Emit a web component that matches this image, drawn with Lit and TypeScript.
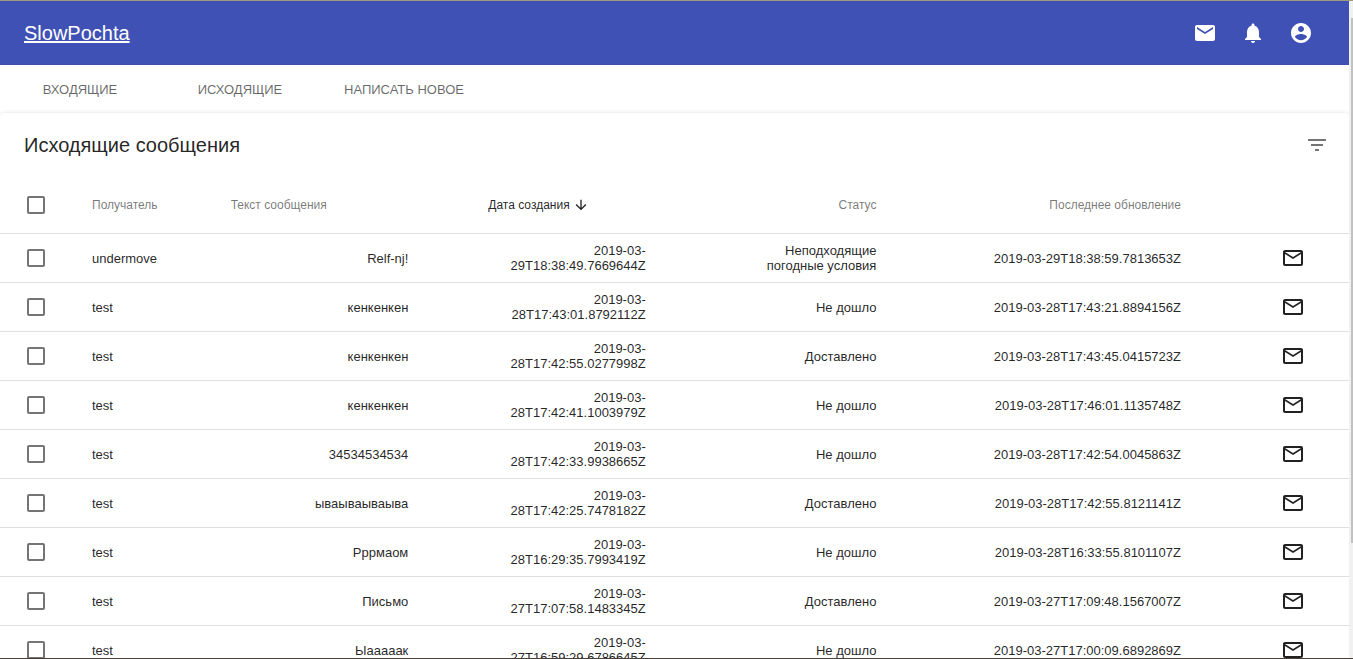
import { LitElement, html, css, svg } from "lit";
import { customElement, property, state } from "lit/decorators.js";

const ICONS: Record<string, string> = {
  mail: "M20 4H4c-1.1 0-1.99.9-1.99 2L2 18c0 1.1.9 2 2 2h16c1.1 0 2-.9 2-2V6c0-1.1-.9-2-2-2zm0 4l-8 5-8-5V6l8 5 8-5v2z",
  mailOutline:
    "M20 4H4c-1.1 0-1.99.9-1.99 2L2 18c0 1.1.9 2 2 2h16c1.1 0 2-.9 2-2V6c0-1.1-.9-2-2-2zm0 14H4V8l8 5 8-5v10zm-8-7L4 6h16l-8 5z",
  bell: "M12 22c1.1 0 2-.9 2-2h-4c0 1.1.89 2 2 2zm6-6v-5c0-3.07-1.64-5.64-4.5-6.32V4c0-.83-.67-1.5-1.5-1.5s-1.5.67-1.5 1.5v.68C7.63 5.36 6 7.92 6 11v5l-2 2v1h16v-1l-2-2z",
  account:
    "M12 2C6.48 2 2 6.48 2 12s4.48 10 10 10 10-4.48 10-10S17.52 2 12 2zm0 3c1.66 0 3 1.34 3 3s-1.34 3-3 3-3-1.34-3-3 1.34-3 3-3zm0 14.2c-2.5 0-4.71-1.28-6-3.22.03-1.99 4-3.08 6-3.08 1.99 0 5.97 1.09 6 3.08-1.29 1.94-3.5 3.22-6 3.22z",
  filter: "M10 18h4v-2h-4v2zM3 6v2h18V6H3zm3 7h12v-2H6v2z",
  arrowDown: "M20 12l-1.41-1.41L13 16.17V4h-2v12.17l-5.58-5.59L4 12l8 8 8-8z",
};

@customElement("md-icon")
export class MdIcon extends LitElement {
  static styles = css`
    :host {
      display: inline-block;
      width: 24px;
      height: 24px;
    }
    .glyph {
      display: block;
      width: 100%;
      height: 100%;
      fill: currentColor;
    }
  `;

  @property() name = "";

  render() {
    return html`<svg class="glyph" viewBox="0 0 24 24" aria-hidden="true">
      ${svg`<path d=${ICONS[this.name] ?? ""}></path>`}
    </svg>`;
  }
}

interface Message {
  to: string;
  text: string;
  created: string;
  status: string;
  updated: string;
}

const MESSAGES: Message[] = [
  { to: "undermove", text: "Relf-nj!", created: "2019-03-29T18:38:49.7669644Z", status: "Неподходящие погодные условия", updated: "2019-03-29T18:38:59.7813653Z" },
  { to: "test", text: "кенкенкен", created: "2019-03-28T17:43:01.8792112Z", status: "Не дошло", updated: "2019-03-28T17:43:21.8894156Z" },
  { to: "test", text: "кенкенкен", created: "2019-03-28T17:42:55.0277998Z", status: "Доставлено", updated: "2019-03-28T17:43:45.0415723Z" },
  { to: "test", text: "кенкенкен", created: "2019-03-28T17:42:41.1003979Z", status: "Не дошло", updated: "2019-03-28T17:46:01.1135748Z" },
  { to: "test", text: "34534534534", created: "2019-03-28T17:42:33.9938665Z", status: "Не дошло", updated: "2019-03-28T17:42:54.0045863Z" },
  { to: "test", text: "ываываываыва", created: "2019-03-28T17:42:25.7478182Z", status: "Доставлено", updated: "2019-03-28T17:42:55.8121141Z" },
  { to: "test", text: "Рррмаом", created: "2019-03-28T16:29:35.7993419Z", status: "Не дошло", updated: "2019-03-28T16:33:55.8101107Z" },
  { to: "test", text: "Письмо", created: "2019-03-27T17:07:58.1483345Z", status: "Доставлено", updated: "2019-03-27T17:09:48.1567007Z" },
  { to: "test", text: "Ыааааак", created: "2019-03-27T16:59:29.6786645Z", status: "Не дошло", updated: "2019-03-27T17:00:09.6892869Z" },
];

@customElement("app-root")
export class AppRoot extends LitElement {
  static styles = css`
    :host {
      display: grid;
      grid-template-columns: minmax(0, 1fr) 4px;
      height: 100vh;
      box-sizing: border-box;
      border-top: 1px solid #a09a82;
      border-bottom: 1px solid #4b4038;
      overflow: hidden;
      background: #fff;
      color: rgba(0, 0, 0, 0.87);
      font-family: "Liberation Sans", Arial, sans-serif;
    }
    .page {
      overflow: hidden;
    }
    .appbar {
      display: flex;
      align-items: center;
      justify-content: space-between;
      height: 64px;
      padding: 0 24px;
      background: #3f51b5;
      color: #fff;
    }
    .brand {
      color: inherit;
      font-size: 20px;
      line-height: 32px;
    }
    .actions {
      display: flex;
    }
    .icon-button {
      display: inline-flex;
      align-items: center;
      justify-content: center;
      width: 48px;
      height: 48px;
      padding: 0;
      border: 0;
      border-radius: 50%;
      background: none;
      color: inherit;
      cursor: pointer;
    }
    .tabs {
      display: flex;
      height: 48px;
    }
    .tab {
      min-width: 160px;
      padding: 0 24px;
      border: 0;
      background: none;
      color: rgba(0, 0, 0, 0.6);
      font: inherit;
      font-size: 13px;
      text-transform: uppercase;
      cursor: pointer;
    }
    .paper {
      border-radius: 4px;
      background: #fff;
      box-shadow: 0 1px 5px rgba(0, 0, 0, 0.2), 0 2px 2px rgba(0, 0, 0, 0.14),
        0 3px 1px -2px rgba(0, 0, 0, 0.12);
    }
    .toolbar {
      display: flex;
      align-items: center;
      justify-content: space-between;
      height: 64px;
      padding: 0 8px 0 24px;
    }
    .title {
      margin: 0;
      font-size: 20px;
      font-weight: 400;
      line-height: 32px;
    }
    .filter {
      color: rgba(0, 0, 0, 0.54);
    }
    .table {
      width: 100%;
      table-layout: fixed;
      border-collapse: separate;
      border-spacing: 0;
    }
    .col-check { width: 92px; }
    .col-to { width: 8.5%; }
    .col-text { width: 19.1%; }
    .col-created { width: 17.6%; }
    .col-status { width: 17.1%; }
    .col-action { width: 112px; }
    .head {
      height: 57px;
    }
    .row {
      height: 49px;
    }
    .cell {
      padding: 0 56px 0 24px;
      border-bottom: 1px solid #e0e0e0;
      font-size: 13px;
      font-weight: 400;
      line-height: 15px;
      text-align: left;
      vertical-align: middle;
    }
    .head .cell {
      color: rgba(0, 0, 0, 0.54);
      font-size: 12px;
    }
    .cell.check {
      padding: 0 0 0 27px;
    }
    .cell.to {
      padding: 0;
    }
    .cell.numeric {
      text-align: right;
    }
    .cell.action {
      padding: 0;
      text-align: center;
    }
    .cell.action .icon-button {
      height: 24px;
      vertical-align: middle;
    }
    .checkbox {
      appearance: none;
      display: block;
      width: 18px;
      height: 18px;
      margin: 0;
      border: 2px solid #757575;
      border-radius: 2px;
    }
    .checkbox:checked {
      border-color: #3f51b5;
      background: #3f51b5;
    }
    .sort {
      display: inline-flex;
      align-items: center;
      gap: 3px;
      height: 16px;
      padding: 0;
      border: 0;
      background: none;
      color: inherit;
      font: inherit;
      white-space: nowrap;
      vertical-align: middle;
      cursor: pointer;
    }
    .sort.active {
      color: rgba(0, 0, 0, 0.87);
    }
    .sort-icon {
      width: 16px;
      height: 16px;
    }
    .scrollbar {
      padding-top: 17px;
      background: #f1f1f1;
    }
    .thumb {
      height: 82%;
      margin-left: 2px;
      background: #c1c1c1;
    }
  `;

  @state() private selected = new Set<number>();

  private toggle(index: number) {
    const next = new Set(this.selected);
    next.has(index) ? next.delete(index) : next.add(index);
    this.selected = next;
  }

  private toggleAll(event: Event) {
    const on = (event.target as HTMLInputElement).checked;
    this.selected = new Set(on ? MESSAGES.map((_, i) => i) : []);
  }

  private renderRow(message: Message, index: number) {
    return html`<tr class="row">
      <td class="cell check">
        <input class="checkbox" type="checkbox" aria-label="Выбрать сообщение"
          .checked=${this.selected.has(index)} @change=${() => this.toggle(index)} />
      </td>
      <td class="cell to">${message.to}</td>
      <td class="cell numeric">${message.text}</td>
      <td class="cell numeric">${message.created}</td>
      <td class="cell numeric">${message.status}</td>
      <td class="cell numeric">${message.updated}</td>
      <td class="cell action">
        <button class="icon-button" aria-label="Открыть"><md-icon name="mailOutline"></md-icon></button>
      </td>
    </tr>`;
  }

  render() {
    return html`
      <div class="page">
        <header class="appbar">
          <a class="brand" href="#">SlowPochta</a>
          <div class="actions">
            <button class="icon-button" aria-label="Сообщения"><md-icon name="mail"></md-icon></button>
            <button class="icon-button" aria-label="Уведомления"><md-icon name="bell"></md-icon></button>
            <button class="icon-button" aria-label="Профиль"><md-icon name="account"></md-icon></button>
          </div>
        </header>
        <nav class="tabs">
          <button class="tab">Входящие</button>
          <button class="tab">Исходящие</button>
          <button class="tab">Написать новое</button>
        </nav>
        <main class="paper">
          <div class="toolbar">
            <h2 class="title">Исходящие сообщения</h2>
            <button class="icon-button filter" aria-label="Фильтр"><md-icon name="filter"></md-icon></button>
          </div>
          <table class="table">
            <colgroup>
              <col class="col-check" />
              <col class="col-to" />
              <col class="col-text" />
              <col class="col-created" />
              <col class="col-status" />
              <col />
              <col class="col-action" />
            </colgroup>
            <thead>
              <tr class="head">
                <th class="cell check">
                  <input class="checkbox" type="checkbox" aria-label="Выбрать все"
                    .checked=${this.selected.size === MESSAGES.length} @change=${this.toggleAll} />
                </th>
                <th class="cell to"><button class="sort">Получатель</button></th>
                <th class="cell"><button class="sort">Текст сообщения</button></th>
                <th class="cell" aria-sort="descending">
                  <button class="sort active">Дата создания<md-icon class="sort-icon" name="arrowDown"></md-icon></button>
                </th>
                <th class="cell numeric"><button class="sort">Статус</button></th>
                <th class="cell numeric"><button class="sort">Последнее обновление</button></th>
                <th class="cell action"></th>
              </tr>
            </thead>
            <tbody>
              ${MESSAGES.map((message, index) => this.renderRow(message, index))}
            </tbody>
          </table>
        </main>
      </div>
      <div class="scrollbar"><div class="thumb"></div></div>
    `;
  }
}
